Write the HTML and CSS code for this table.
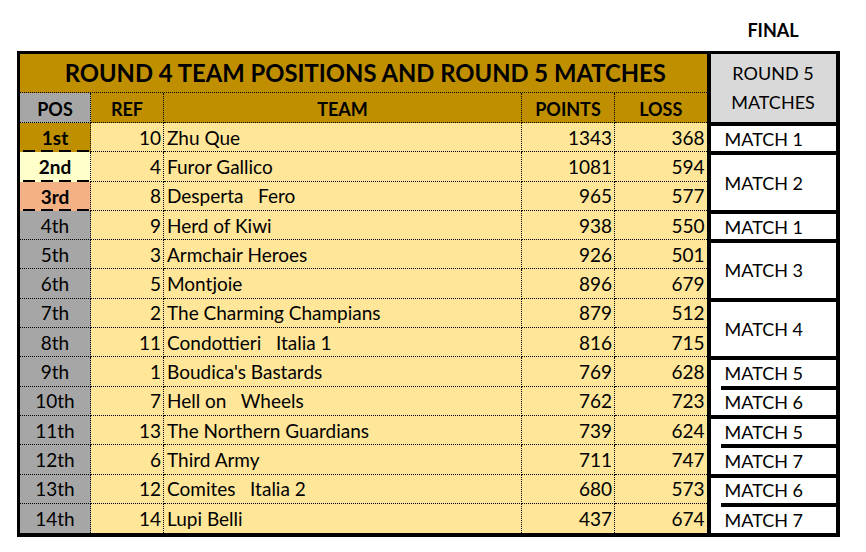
FILE: index.html
```html
<!DOCTYPE html>
<html>
<head>
<meta charset="utf-8">
<link rel="stylesheet" href="styles.css">
</head>
<body>
<div class="page">
  <div class="top">
    <div class="top-spacer"></div>
    <div class="final">FINAL</div>
  </div>
  <div class="sheet">
    <div class="grid">
      <div class="title">ROUND 4 TEAM POSITIONS AND ROUND 5 MATCHES</div>
      <div class="c h hpos">POS</div>
      <div class="c h">REF</div>
      <div class="c h">TEAM</div>
      <div class="c h">POINTS</div>
      <div class="c h last">LOSS</div>

      <div class="c pos p1 dash">1st</div><div class="c num">10</div><div class="c team">Zhu Que</div><div class="c num">1343</div><div class="c num last">368</div>
      <div class="c pos p2 dash">2nd</div><div class="c num">4</div><div class="c team">Furor Gallico</div><div class="c num">1081</div><div class="c num last">594</div>
      <div class="c pos p3 dash">3rd</div><div class="c num">8</div><div class="c team">Desperta   Fero</div><div class="c num">965</div><div class="c num last">577</div>
      <div class="c pos pg">4th</div><div class="c num">9</div><div class="c team">Herd of Kiwi</div><div class="c num">938</div><div class="c num last">550</div>
      <div class="c pos pg">5th</div><div class="c num">3</div><div class="c team">Armchair Heroes</div><div class="c num">926</div><div class="c num last">501</div>
      <div class="c pos pg">6th</div><div class="c num">5</div><div class="c team">Montjoie</div><div class="c num">896</div><div class="c num last">679</div>
      <div class="c pos pg">7th</div><div class="c num">2</div><div class="c team">The Charming Champians</div><div class="c num">879</div><div class="c num last">512</div>
      <div class="c pos pg">8th</div><div class="c num">11</div><div class="c team">Condottieri   Italia 1</div><div class="c num">816</div><div class="c num last">715</div>
      <div class="c pos pg">9th</div><div class="c num">1</div><div class="c team">Boudica's Bastards</div><div class="c num">769</div><div class="c num last">628</div>
      <div class="c pos pg">10th</div><div class="c num">7</div><div class="c team">Hell on   Wheels</div><div class="c num">762</div><div class="c num last">723</div>
      <div class="c pos pg">11th</div><div class="c num">13</div><div class="c team">The Northern Guardians</div><div class="c num">739</div><div class="c num last">624</div>
      <div class="c pos pg">12th</div><div class="c num">6</div><div class="c team">Third Army</div><div class="c num">711</div><div class="c num last">747</div>
      <div class="c pos pg">13th</div><div class="c num">12</div><div class="c team">Comites   Italia 2</div><div class="c num">680</div><div class="c num last">573</div>
      <div class="c pos pg bottom">14th</div><div class="c num bottom">14</div><div class="c team bottom">Lupi Belli</div><div class="c num bottom">437</div><div class="c num last bottom">674</div>
    </div>
    <div class="matches">
      <div class="mhead"><span>ROUND 5</span><span>MATCHES</span></div>
      <div class="mblock s1"><div class="sep"></div><div class="mtext">MATCH 1</div></div>
      <div class="mblock s2"><div class="sep"></div><div class="mtext">MATCH 2</div></div>
      <div class="mblock s1"><div class="sep"></div><div class="mtext">MATCH 1</div></div>
      <div class="mblock s2"><div class="sep"></div><div class="mtext">MATCH 3</div></div>
      <div class="mblock s2"><div class="sep"></div><div class="mtext">MATCH 4</div></div>
      <div class="mblock s1"><div class="sep"></div><div class="mtext">MATCH 5</div></div>
      <div class="mblock s1"><div class="sep part"></div><div class="mtext">MATCH 6</div></div>
      <div class="mblock s1"><div class="sep"></div><div class="mtext">MATCH 5</div></div>
      <div class="mblock s1"><div class="sep part"></div><div class="mtext">MATCH 7</div></div>
      <div class="mblock s1"><div class="sep"></div><div class="mtext">MATCH 6</div></div>
      <div class="mblock s1 lastblock"><div class="sep part"></div><div class="mtext">MATCH 7</div></div>
    </div>
  </div>
</div>
</body>
</html>
```
FILE: styles.css
```css
* { box-sizing: border-box; }
html, body { margin: 0; padding: 0; background: #fff; }
body { font-family: Lato, "Liberation Sans", sans-serif; color: #000; }

.page { padding-left: 17px; width: 866px; }

.top { display: flex; height: 51px; }
.top-spacer { width: 689.5px; }
.final {
  width: 133px;
  text-align: center;
  font-weight: 700;
  font-size: 18px;
  line-height: 20px;
  padding-top: 20px;
}

.sheet {
  display: flex;
  width: 822.5px;
  border-top: 3px solid #000;
  border-left: 3px solid #000;
  border-bottom: 4px solid #000;
}

.grid {
  display: grid;
  grid-template-columns: 71px 73px 358px 93px 91.5px;
  grid-template-rows: 39px 30px repeat(14, 29.3px);
  background: #ffe699;
}

.title {
  grid-column: 1 / 6;
  background: #bf8f00;
  border-bottom: 1px dotted #000;
  display: flex;
  align-items: center;
  justify-content: center;
  font-weight: 700;
  font-size: 23.8px;
  padding-left: 4px;
}

.c {
  display: flex;
  align-items: center;
  border-right: 1px dotted #000;
  border-bottom: 1px dotted #000;
  font-size: 19px;
  padding: 0 3px;
  white-space: pre;
  overflow: hidden;
}
.c.last { border-right: none; }
.c.bottom { border-bottom: none; }

.h {
  background: #bf8f00;
  justify-content: center;
  font-weight: 700;
  font-size: 18px;
  padding-top: 2px;
}
.h.hpos { background: #a6a6a6; }

.num { justify-content: flex-end; padding-right: 2px; }
.team { padding-left: 3px; }

.pos { justify-content: center; }
.p1 { background-color: #bf8f00; font-weight: 700; }
.p2 { background-color: #ffffcc; font-weight: 700; }
.p3 { background-color: #f4b183; font-weight: 700; }
.pg { background-color: #a6a6a6; }

.dash {
  border-bottom: none;
  background-image: linear-gradient(90deg, #000 0 12px, transparent 12px 18px);
  background-repeat: repeat-x;
  background-size: 18px 2px;
  background-position: 3px 100%;
}

.matches {
  width: 133px;
  border-left: 4px solid #000;
  border-right: 4px solid #000;
  background: #fff;
  display: flex;
  flex-direction: column;
}

.mhead {
  height: 68px;
  flex: none;
  background: #d9d9d9;
  display: flex;
  flex-direction: column;
  align-items: center;
  justify-content: center;
  font-size: 18px;
  line-height: 29px;
}

.mblock { display: flex; flex-direction: column; flex: none; }
.mblock.s1 { height: 29.3px; }
.mblock.s2 { height: 58.6px; }
.mblock.lastblock { flex: 1 0 auto; }

.sep { height: 4px; background: #000; flex: none; }
.sep.part { margin-left: 10px; }

.mtext {
  flex: 1;
  display: flex;
  align-items: center;
  padding-left: 14px;
  font-size: 18px;
}
```
